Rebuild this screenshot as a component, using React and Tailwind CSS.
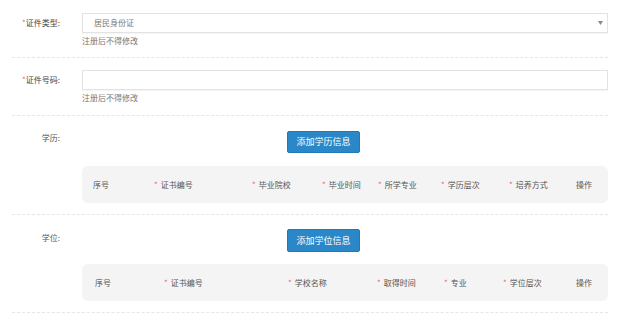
import React from "react";

const eduCols = [
  { label: "序号", w: "w-[61px]" },
  { label: "证书编号", w: "w-[98px]", req: true },
  { label: "毕业院校", w: "w-[70px]", req: true },
  { label: "毕业时间", w: "w-[56px]", req: true },
  { label: "所学专业", w: "w-[63px]", req: true },
  { label: "学历层次", w: "w-[68px]", req: true },
  { label: "培养方式", w: "w-[67px]", req: true },
  { label: "操作", w: "" },
];

const degreeCols = [
  { label: "序号", w: "w-[69px]" },
  { label: "证书编号", w: "w-[124px]", req: true },
  { label: "学校名称", w: "w-[89px]", req: true },
  { label: "取得时间", w: "w-[67px]", req: true },
  { label: "专业", w: "w-[59px]", req: true },
  { label: "学位层次", w: "w-[73px]", req: true },
  { label: "操作", w: "" },
];

const Star = () => <span className="text-[#f0626b] mr-[3px]">*</span>;

const HeaderTable = ({ cols, pl }) => (
  <div className={`h-[37px] bg-[#f4f4f4] rounded-[6px] flex items-center text-[8px] leading-[10px] text-[#555] ${pl}`}>
    {cols.map((c, i) => (
      <div key={i} className={`${c.w} shrink-0 whitespace-nowrap`}>
        {c.req && <Star />}
        {c.label}
      </div>
    ))}
  </div>
);

const App = () => {
  return (
    <div
      className="w-[629px] h-[319px] bg-white overflow-hidden pl-[12px] pr-[21px] leading-[10px]"
      style={{ fontFamily: '"Noto Sans CJK SC", "Noto Sans", sans-serif' }}
    >
      {/* 证件类型 */}
      <div className="pt-[13px] pb-[11px] border-b border-dashed border-[#e6e6e6]">
        <div className="flex items-center">
          <div className="w-[70px] text-right pr-[22px] text-[8px] text-[#444] whitespace-nowrap">
            <span className="text-[#f0626b]">*</span>证件类型:
          </div>
          <div className="flex-1 h-[20px] border border-[#e3e3e3] shadow-[0_1px_1px_rgba(0,0,0,0.04)] flex items-center justify-between pl-[11px] pr-[4px] text-[8px] text-[#777]">
            <span>居民身份证</span>
            <svg width="5" height="4" viewBox="0 0 5 4">
              <path d="M0 0 L5 0 L2.5 4 Z" fill="#888" />
            </svg>
          </div>
        </div>
        <div className="ml-[70px] mt-[3px] text-[8px] leading-[10px] text-[#777]">注册后不得修改</div>
      </div>

      {/* 证件号码 */}
      <div className="pt-[12px] pb-[12px] border-b border-dashed border-[#e6e6e6]">
        <div className="flex items-center">
          <div className="w-[70px] text-right pr-[22px] text-[8px] text-[#444] whitespace-nowrap">
            <span className="text-[#f0626b]">*</span>证件号码:
          </div>
          <div className="flex-1 h-[20px] border border-[#e3e3e3] shadow-[0_1px_1px_rgba(0,0,0,0.04)]" />
        </div>
        <div className="ml-[70px] mt-[3px] text-[8px] leading-[10px] text-[#777]">注册后不得修改</div>
      </div>

      {/* 学历 */}
      <div className="pt-[15px] pb-[11px] border-b border-dashed border-[#e6e6e6]">
        <div className="flex">
          <div className="w-[70px] text-right pr-[22px] text-[8px] text-[#555] pt-[2px]">学历:</div>
          <div className="flex-1 flex pl-[205px]">
            <button className="h-[22px] w-[73px] bg-[#2a87c8] rounded-[2px] text-white text-[9px] border border-[#2279b8]">
              添加学历信息
            </button>
          </div>
        </div>
        <div className="ml-[70px] mt-[13px]">
          <HeaderTable cols={eduCols} pl="pl-[11px]" />
        </div>
      </div>

      {/* 学位 */}
      <div className="pt-[14px] pb-[11px] border-b border-dashed border-[#e6e6e6]">
        <div className="flex">
          <div className="w-[70px] text-right pr-[22px] text-[8px] text-[#555] pt-[4px]">学位:</div>
          <div className="flex-1 flex pl-[205px]">
            <button className="h-[23px] w-[73px] bg-[#2a87c8] rounded-[2px] text-white text-[9px] border border-[#2279b8]">
              添加学位信息
            </button>
          </div>
        </div>
        <div className="ml-[70px] mt-[12px]">
          <HeaderTable cols={degreeCols} pl="pl-[13px]" />
        </div>
      </div>
    </div>
  );
};

export default App;
